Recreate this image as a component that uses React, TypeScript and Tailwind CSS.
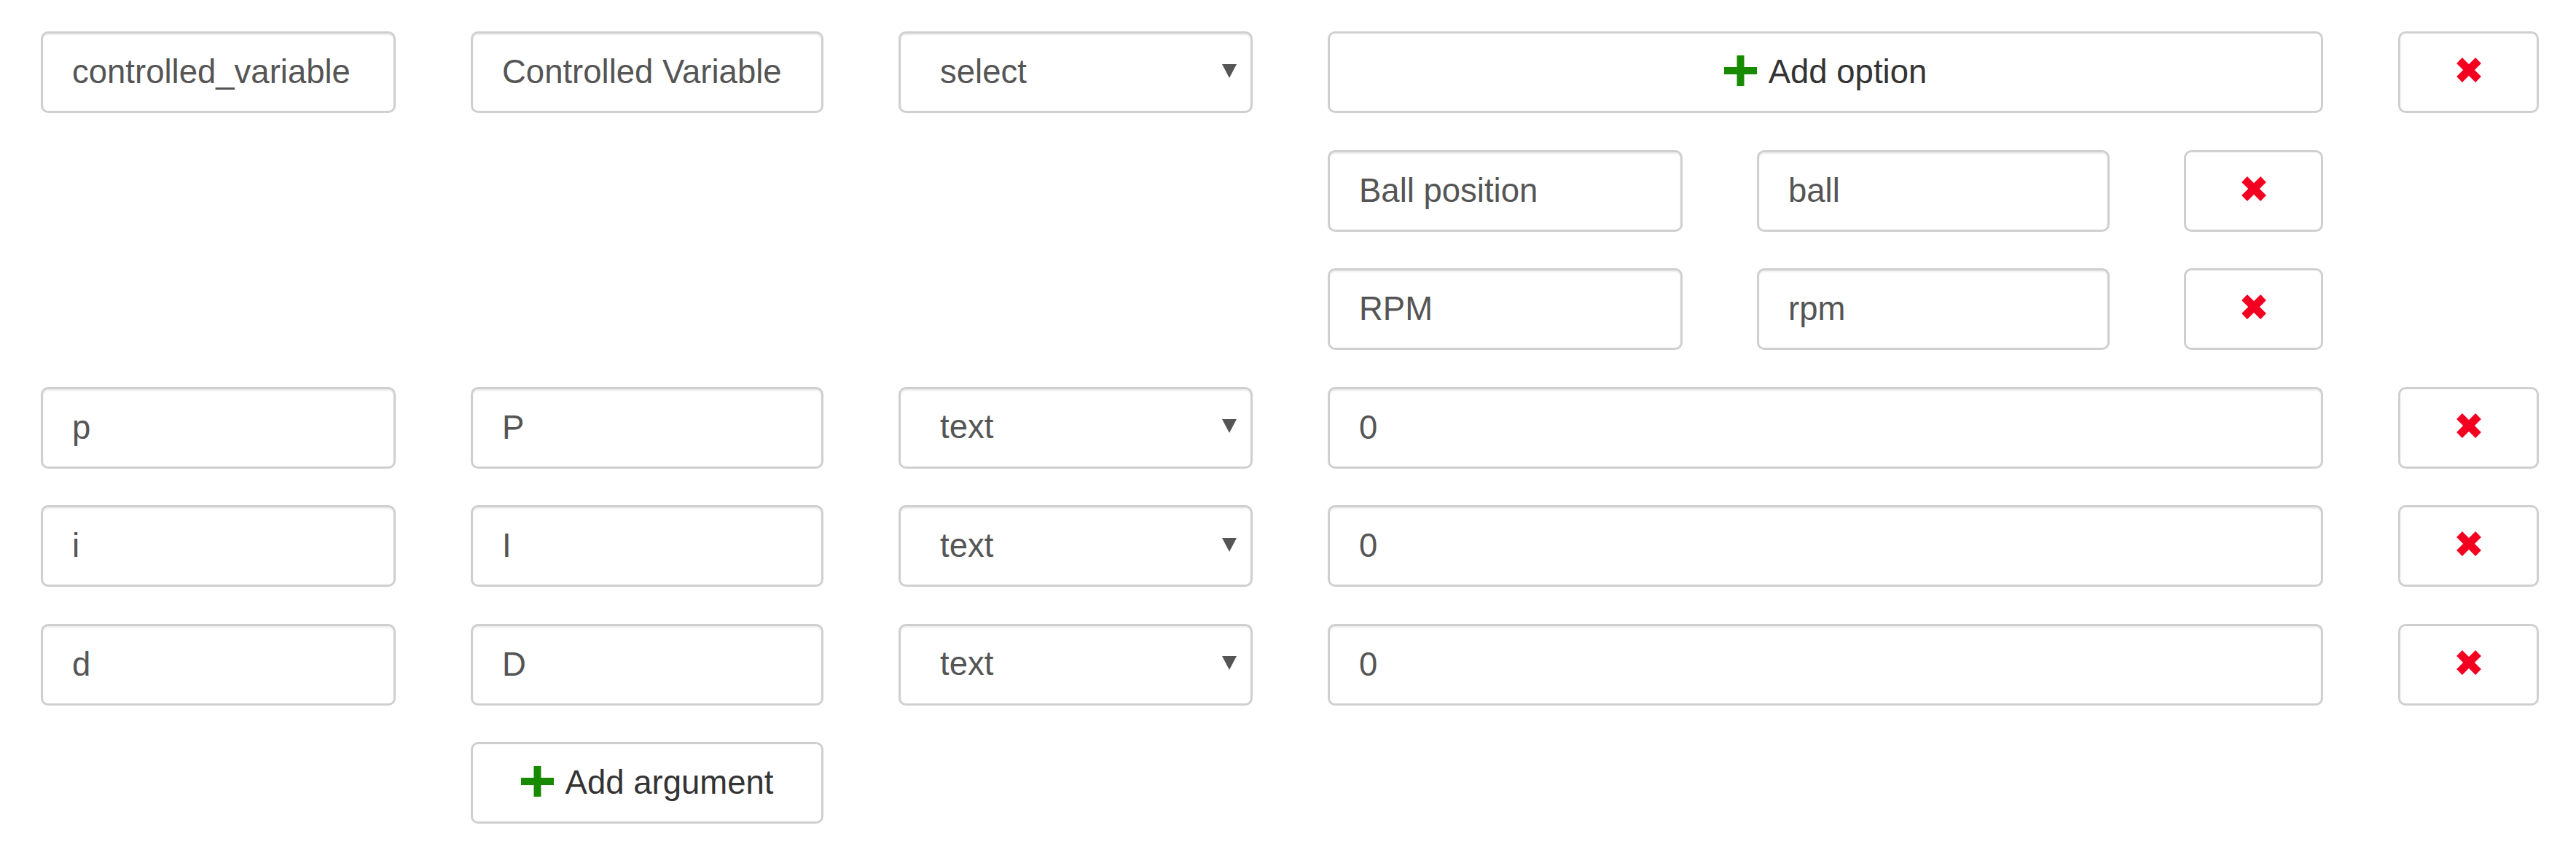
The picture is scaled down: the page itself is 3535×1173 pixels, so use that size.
import React from "react";

const field =
  "h-full w-full rounded-[10px] border-[3px] border-[#cfcfcf] bg-white pl-[40px] pr-[16px] text-[45.5px] text-[#555] shadow-[inset_0_2px_2px_rgba(0,0,0,0.075)] outline-none";

const btn =
  "flex h-full w-full items-center justify-center rounded-[10px] border-[3px] border-[#cfcfcf] bg-white text-[45.5px] text-[#333]";

function TextField({ value, className = "" }: { value: string; className?: string }) {
  return (
    <input
      className={`${field} ${className}`}
      defaultValue={value}
      style={{ fontFamily: '"Liberation Sans", Arial, sans-serif' }}
    />
  );
}

function SelectField({ value }: { value: string }) {
  return (
    <div className="flex h-full w-full items-center rounded-[10px] border-[3px] border-[#cfcfcf] bg-white pl-[54px] pr-[19px] shadow-[inset_0_2px_2px_rgba(0,0,0,0.075)]">
      <span className="flex-1 text-[45.5px] text-[#555]">{value}</span>
      <svg width="20" height="19" viewBox="0 0 20 19" className="mt-[-4px]">
        <polygon points="0,0 20,0 10,19" fill="#555" />
      </svg>
    </div>
  );
}

function Plus() {
  return (
    <svg width="45" height="42" viewBox="0 0 45 42" className="mr-[16px] mt-[-4px]">
      <rect x="0" y="16" width="45" height="10" fill="#178a00" />
      <rect x="17.5" y="0" width="10" height="42" fill="#178a00" />
    </svg>
  );
}

function RemoveButton() {
  return (
    <button className={btn}>
      <svg width="38" height="36" viewBox="0 0 38 36" className="mt-[-6px]">
        <path d="M6 5 L32 31 M32 5 L6 31" stroke="#f30021" strokeWidth="11" strokeLinecap="butt" />
      </svg>
    </button>
  );
}

type Arg = { name: string; label: string; type: string; value: string };

const args: Arg[] = [
  { name: "p", label: "P", type: "text", value: "0" },
  { name: "i", label: "I", type: "text", value: "0" },
  { name: "d", label: "D", type: "text", value: "0" },
];

const options = [
  { label: "Ball position", value: "ball" },
  { label: "RPM", value: "rpm" },
];

export default function App() {
  return (
    <div
      className="min-h-screen bg-white pl-[56px] pt-[43px]"
      style={{ fontFamily: '"Liberation Sans", Arial, sans-serif' }}
    >
      <div className="grid auto-rows-[112px] grid-cols-[487px_484px_486px_1366px_193px] gap-x-[103px] gap-y-[50.5px]">
        {/* select argument */}
        <TextField value="controlled_variable" />
        <TextField value="Controlled Variable" />
        <SelectField value="select" />
        <button className={btn}>
          <Plus />
          Add option
        </button>
        <RemoveButton />

        {options.map((o) => (
          <div key={o.value} className="col-start-4 grid grid-cols-[487px_484px_191px] gap-x-[102px]">
            <TextField value={o.label} />
            <TextField value={o.value} />
            <RemoveButton />
          </div>
        ))}

        {args.map((a) => (
          <React.Fragment key={a.name}>
            <TextField value={a.name} className="col-start-1" />
            <TextField value={a.label} />
            <SelectField value={a.type} />
            <TextField value={a.value} />
            <RemoveButton />
          </React.Fragment>
        ))}

        <button className={`${btn} col-start-2`}>
          <Plus />
          Add argument
        </button>
      </div>
    </div>
  );
}
